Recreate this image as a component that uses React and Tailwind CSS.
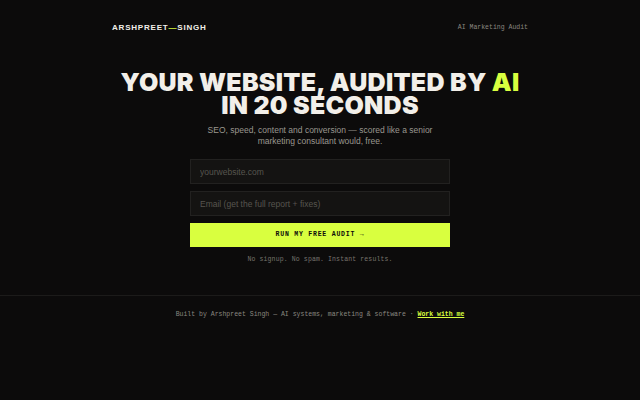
export default function App() {
  return (
    <div className="min-h-screen w-full bg-[#0c0b0b] text-[#f2efe9] flex flex-col font-['Inter','Liberation_Sans',sans-serif]">
      <header className="w-[416px] mx-auto flex items-center justify-between h-[56px]">
        <div className="text-[8px] font-black tracking-[0.1em] text-[#f2efe9] font-['Liberation_Sans',sans-serif]">
          ARSHPREET<span className="text-[#d9ff3f]">—</span>SINGH
        </div>
        <div className="text-[6.5px] text-[#8a8780] font-['Liberation_Mono',monospace]">
          AI Marketing Audit
        </div>
      </header>

      <main className="flex flex-col items-center pt-[15px]">
        <h1 className="text-center text-[25px] leading-[23px] font-black tracking-[0.01em] text-[#f2efe9]">
          YOUR WEBSITE, AUDITED BY <span className="text-[#d9ff3f]">AI</span>
          <br />
          IN 20 SECONDS
        </h1>
        <p className="mt-[8px] text-center text-[8.5px] leading-[11px] text-[#9a978f] font-['Liberation_Sans',sans-serif]">
          SEO, speed, content and conversion — scored like a senior
          <br />
          marketing consultant would, free.
        </p>

        <form className="mt-[12px] w-[260px] flex flex-col gap-[7px]" onSubmit={(e) => e.preventDefault()}>
          <input
            placeholder="yourwebsite.com"
            className="h-[25px] px-[9px] bg-[#141312] border border-[#222120] text-[8.5px] text-[#f2efe9] placeholder:text-[#57554f] outline-none font-['Liberation_Sans',sans-serif]"
          />
          <input
            placeholder="Email (get the full report + fixes)"
            className="h-[25px] px-[9px] bg-[#141312] border border-[#222120] text-[8.5px] text-[#f2efe9] placeholder:text-[#57554f] outline-none font-['Liberation_Sans',sans-serif]"
          />
          <button
            type="submit"
            className="h-[24px] bg-[#d9ff3f] text-[#0c0b0b] text-[6.5px] font-bold tracking-[0.12em] font-['Liberation_Mono',monospace]"
          >
            RUN MY FREE AUDIT →
          </button>
        </form>
        <p className="mt-[8px] text-[6.5px] text-[#77746d] tracking-[0.02em] font-['Liberation_Mono',monospace]">
          No signup. No spam. Instant results.
        </p>
      </main>

      <footer className="mt-[30px] border-t border-[#1c1b1a] flex justify-center pt-[14px]">
        <p className="text-[6.5px] text-[#8a8780] font-['Liberation_Mono',monospace]">
          Built by Arshpreet Singh — AI systems, marketing &amp; software ·{" "}
          <a href="#" className="text-[#d9ff3f] underline font-bold">Work with me</a>
        </p>
      </footer>
    </div>
  );
}
